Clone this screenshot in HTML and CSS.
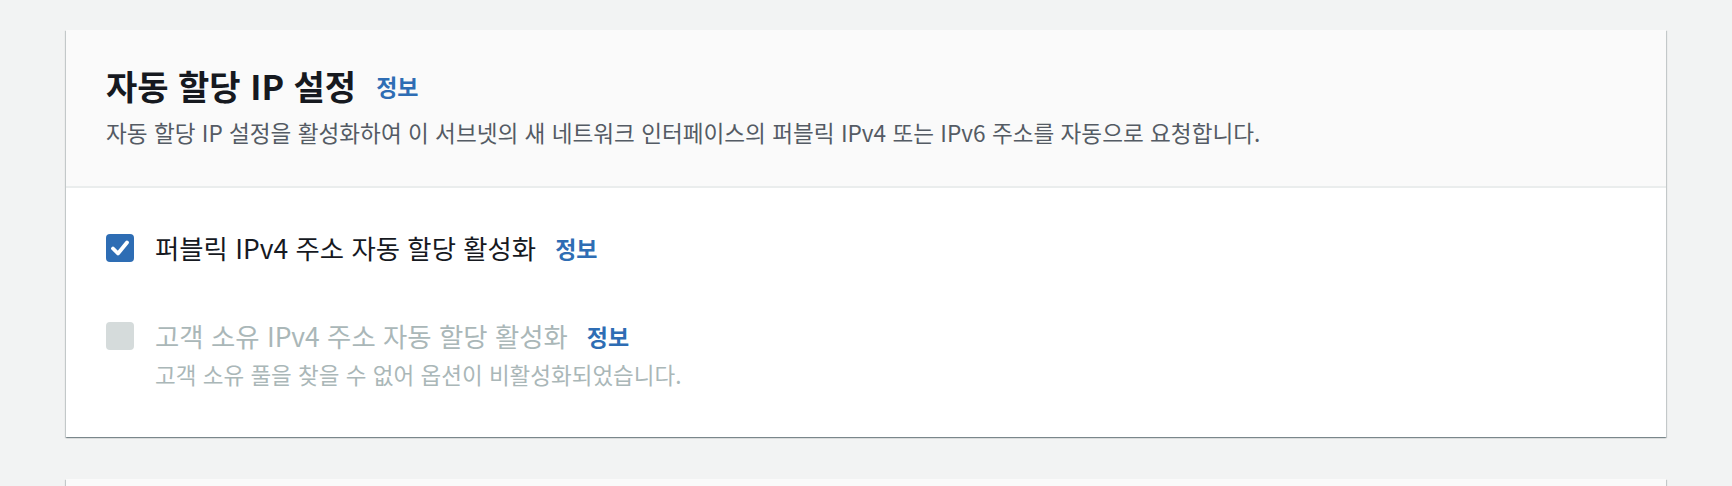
FILE: index.html
```html
<!DOCTYPE html>
<html lang="ko">
<head>
<meta charset="utf-8">
<title>자동 할당 IP 설정</title>
<link rel="stylesheet" href="styles.css">
</head>
<body>
<main class="page">
  <section class="card">
    <header class="card-header">
      <div class="title-row">
        <h2 class="title">자동 할당 IP 설정</h2>
        <a class="info" href="#">정보</a>
      </div>
      <p class="desc">자동 할당 IP 설정을 활성화하여 이 서브넷의 새 네트워크 인터페이스의 퍼블릭 IPv4 또는 IPv6 주소를 자동으로 요청합니다.</p>
    </header>
    <div class="card-body">
      <div class="option">
        <span class="box checked">
          <svg viewBox="0 0 28 28" width="28" height="28"><path d="M7 14.5 L12 19.5 L21 8.5" fill="none" stroke="#fff" stroke-width="3.8" stroke-linecap="round" stroke-linejoin="round"/></svg>
        </span>
        <div class="option-text">
          <div class="label-row">
            <span class="label">퍼블릭 IPv4 주소 자동 할당 활성화</span>
            <a class="info" href="#">정보</a>
          </div>
        </div>
      </div>
      <div class="option disabled">
        <span class="box"></span>
        <div class="option-text">
          <div class="label-row">
            <span class="label">고객 소유 IPv4 주소 자동 할당 활성화</span>
            <a class="info" href="#">정보</a>
          </div>
          <div class="sub">고객 소유 풀을 찾을 수 없어 옵션이 비활성화되었습니다.</div>
        </div>
      </div>
    </div>
  </section>
  <section class="card next">
    <header class="card-header"></header>
  </section>
</main>
</body>
</html>
```

FILE: styles.css
```css
* { box-sizing: border-box; }
html, body {
  margin: 0;
  background: #f2f3f3;
  font-family: "Noto Sans CJK KR", "Noto Sans", sans-serif;
  overflow: hidden;
}
.page {
  padding: 30px 66px 0;
  display: flex;
  flex-direction: column;
  gap: 42px;
}
.card {
  background: #fff;
  box-shadow: 0 1px 1px 0 rgba(0, 28, 36, 0.3), 1px 1px 1px 0 rgba(0, 28, 36, 0.15), -1px 1px 1px 0 rgba(0, 28, 36, 0.15);
}
.card-header {
  background: #fafafa;
  border-bottom: 2px solid #eaeded;
  padding: 36px 40px 38px;
}
.card.next .card-header { height: 60px; }
.title-row {
  display: flex;
  align-items: center;
  gap: 20px;
  height: 40px;
}
.title {
  margin: 0;
  font-size: 34px;
  line-height: 40px;
  font-weight: 700;
  color: #16191f;
}
.info {
  color: #2e6db4;
  font-weight: 700;
  font-size: 23px;
  text-decoration: none;
  line-height: 30px;
}
.desc {
  margin: 12px 0 0;
  font-size: 22.6px;
  line-height: 30px;
  color: #545b64;
}
.card-body {
  padding: 43px 40px 48px;
  display: flex;
  flex-direction: column;
  gap: 54px;
}
.option {
  display: flex;
  align-items: flex-start;
  gap: 21px;
}
.box {
  flex: none;
  width: 28px;
  height: 28px;
  border-radius: 4px;
  background: #d5dbdb;
  margin-top: 3px;
  display: flex;
}
.box.checked { background: #2e6db4; }
.option-text {
  display: flex;
  flex-direction: column;
  gap: 6px;
}
.label-row {
  display: flex;
  align-items: center;
  gap: 19px;
  height: 34px;
}
.label {
  font-size: 26.4px;
  line-height: 34px;
  color: #16191f;
}
.option.disabled .label { color: #aab7b8; }
.sub {
  font-size: 22.5px;
  line-height: 30px;
  color: #aab7b8;
}
```
